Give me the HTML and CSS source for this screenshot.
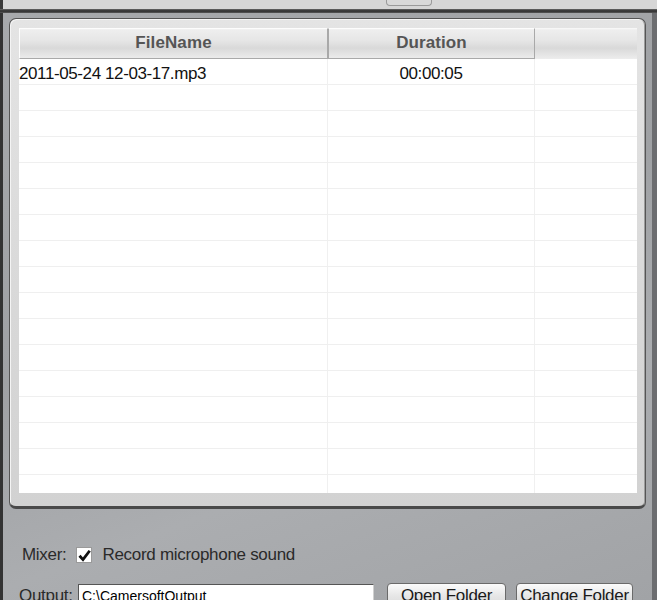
FILE: index.html
```html
<!DOCTYPE html>
<html lang="en">
<head>
  <meta charset="UTF-8">
  <title>Recorder - Files</title>
  <link rel="stylesheet" href="styles.css">
</head>
<body>

  <div class="topbar">
    <div class="tab-btn"></div>
  </div>
  <div class="topbar-edge"></div>

  <div class="window">
    <div class="panel">
      <div class="list">
        <div class="list-head">
          <div class="head-cell">FileName</div>
          <div class="head-cell">Duration</div>
          <div class="head-fill"></div>
        </div>
        <div class="list-body" id="rows"></div>
      </div>
    </div>

    <div class="mixer-row">
      <span class="label">Mixer:</span>
      <span class="check">
        <svg width="13" height="13" viewBox="0 0 12 12">
          <path d="M1.4 6.2 L4.6 9.8 L10.8 1.6" fill="none" stroke="#111" stroke-width="2.6"/>
        </svg>
      </span>
      <span class="label">Record microphone sound</span>
    </div>

    <div class="output-row">
      <span class="label out-label">Output:</span>
      <input class="path" type="text" value="C:\CamersoftOutput">
      <button class="btn btn-open">Open Folder</button>
      <button class="btn btn-change">Change Folder</button>
    </div>
  </div>

  <script>
    // first row holds the recording, the rest are empty grid lines
    const files = [
      { name: "2011-05-24 12-03-17.mp3", duration: "00:00:05" }
    ];
    const rows = document.getElementById("rows");
    for (let i = 0; i < 17; i++) {
      const f = files[i] || { name: "", duration: "" };
      const row = document.createElement("div");
      row.className = "row";
      row.innerHTML =
        '<div class="cell name">' + f.name + '</div>' +
        '<div class="cell dur">' + f.duration + '</div>' +
        '<div class="cell"></div>';
      rows.appendChild(row);
    }
  </script>

</body>
</html>
```

FILE: styles.css
```css
html, body {
  margin: 0;
  padding: 0;
}

body {
  width: 657px;
  height: 600px;
  overflow: hidden;
  font-family: "Liberation Sans", Arial, sans-serif;
  background: #a2a4a7;
}

.topbar {
  height: 9px;
  background: #d6d6d6;
  display: flex;
  border-left: 3px solid #3a3a3a;
}

.tab-btn {
  margin-left: 383px;
  width: 44px;
  height: 5px;
  background: #d9d9d9;
  border: 1px solid #9a9a9a;
  border-top: none;
  border-radius: 0 0 4px 4px;
}

.topbar-edge {
  height: 4px;
  background: linear-gradient(to bottom, #6a6a6a, #2c2c2c 50%, #5a5a5a);
}

.window {
  height: 587px;
  border-left: 3px solid #333;
  border-right: 5px solid #6c6d70;
  background: linear-gradient(160deg, #a7a9ac 0%, #9fa1a4 45%, #abadb0 70%, #a1a3a6 100%);
  padding: 5px 6px 0 6px;
  box-sizing: border-box;
}

.panel {
  background: linear-gradient(to bottom, #e4e4e4, #d8d8d8 60%, #d2d2d2);
  border: 1px solid #555;
  border-bottom: 3px solid #4a4a4a;
  border-radius: 7px;
  padding: 9px 8px 13px 9px;
  box-shadow: inset 1px 1px 0 #f4f4f4, inset -1px 0 0 #9c9c9c;
}

.list {
  height: 465px;
  background: #fff;
  overflow: hidden;
}

.list-head {
  display: grid;
  grid-template-columns: 309px 207px 1fr;
  height: 31px;
  background: linear-gradient(to bottom, #fafafa 0, #eeeeee 2px, #e6e6e6 40%, #d9d9d9 65%, #ededed 100%);
}

.head-cell {
  border: 1px solid #a9a9a9;
  border-left: 1px solid #fdfdfd;
  border-top: 1px solid #fdfdfd;
  font-weight: bold;
  font-size: 17px;
  letter-spacing: 0.1px;
  color: #555;
  text-align: center;
  line-height: 28px;
}

.head-cell + .head-cell {
  border-left: 1px solid #a9a9a9;
}

.row {
  display: grid;
  grid-template-columns: 309px 207px 1fr;
  height: 26px;
  border-bottom: 1px solid #efefef;
  box-sizing: border-box;
}

.cell {
  font-size: 17px;
  letter-spacing: -0.4px;
  color: #111;
  line-height: 30px;
  border-right: 1px solid #f0f0f0;
}

.cell:last-child {
  border-right: none;
}

.dur {
  text-align: center;
}

.mixer-row {
  display: flex;
  align-items: center;
  margin-top: 37px;
  padding-left: 13px;
  height: 18px;
}

.label {
  font-size: 17px;
  color: #2a2a2a;
  letter-spacing: -0.3px;
}

.check {
  width: 16px;
  height: 16px;
  margin: 0 10px 0 10px;
  background: #fff;
  border: 1px solid #9a9a9a;
  box-sizing: border-box;
  display: flex;
  align-items: center;
  justify-content: center;
}

.output-row {
  display: flex;
  align-items: flex-start;
  margin-top: 20px;
  padding-left: 10px;
}

.out-label {
  margin-top: 2px;
  width: 59px;
}

.path {
  width: 296px;
  height: 24px;
  box-sizing: border-box;
  margin: 0;
  border: 1px solid #555;
  border-right-color: #d0d0d0;
  border-bottom-color: #d0d0d0;
  padding: 1px 3px;
  font-family: "Liberation Sans", Arial, sans-serif;
  font-size: 14px;
  color: #000;
  background: #fff;
}

.btn {
  height: 26px;
  margin-top: -1px;
  padding: 0;
  font-family: "Liberation Sans", Arial, sans-serif;
  font-size: 17px;
  letter-spacing: -0.3px;
  color: #1a1a1a;
  background: linear-gradient(to bottom, #fbfbfb, #e6e6e6 50%, #d9d9d9);
  border: 1px solid #6a6a6a;
  border-radius: 4px;
}

.btn-open {
  margin-left: 13px;
  width: 119px;
}

.btn-change {
  margin-left: 10px;
  width: 117px;
}
```
